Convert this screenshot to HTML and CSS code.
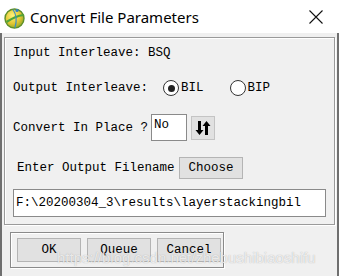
FILE: index.html
```html
<!DOCTYPE html>
<html lang="en">
<head>
    <meta charset="UTF-8">
    <meta name="viewport" content="width=device-width, initial-scale=1.0">
    <title>Convert File Parameters</title>
    <link rel="stylesheet" href="styles.css">
</head>
<body>

<div class="window">
    <!-- Title bar -->
    <div class="titlebar">
        <svg class="app-icon" width="22" height="22" viewBox="0 0 22 22">
            <defs>
                <radialGradient id="globe" cx="0.4" cy="0.35" r="0.7">
                    <stop offset="0" stop-color="#fff27a"/>
                    <stop offset="0.6" stop-color="#e2c631"/>
                    <stop offset="1" stop-color="#8aa526"/>
                </radialGradient>
            </defs>
            <circle cx="10.5" cy="11.5" r="9.5" fill="url(#globe)" stroke="#5e8f2a" stroke-width="1.4"/>
            <path d="M2.5 15 C7 12, 12 9, 19.5 8" stroke="#4fa53a" stroke-width="2.2" fill="none"/>
            <path d="M9 2.5 C12 7, 13 14, 11 20.5" stroke="#3c8fc4" stroke-width="1.2" fill="none"/>
            <circle cx="13" cy="3.5" r="1.6" fill="#2f7fc7"/>
        </svg>
        <span class="title">Convert File Parameters</span>
        <svg class="close" width="14" height="14" viewBox="0 0 14 14">
            <path d="M0.5 0.5 L13.5 13.5 M13.5 0.5 L0.5 13.5" stroke="#111" stroke-width="1.1"/>
        </svg>
    </div>

    <div class="client">
        <!-- Parameters frame -->
        <section class="frame">
            <div class="row row-input">Input Interleave: BSQ</div>

            <div class="row row-output">
                <span class="label-output">Output Interleave:</span>
                <span class="radio checked"></span><span class="radio-text">BIL</span>
                <span class="radio second"></span><span class="radio-text">BIP</span>
            </div>

            <div class="row row-place">
                <span class="label-place">Convert In Place ?</span>
                <span class="small-field">No</span>
                <span class="toggle-btn">
                    <svg width="16" height="16" viewBox="0 0 16 16">
                        <path d="M3 1 H6 V10 H8.5 L4.5 15 L0.5 10 H3 Z" fill="#000"/>
                        <path d="M10 15 H13 V6 H15.5 L11.5 1 L7.5 6 H10 Z" fill="#000"/>
                    </svg>
                </span>
            </div>

            <div class="row row-file">
                <span class="label-file">Enter Output Filename</span>
                <span class="btn choose">Choose</span>
            </div>

            <div class="path-field">F:\20200304_3\results\layerstackingbil</div>
        </section>

        <!-- Action buttons -->
        <div class="actions">
            <span class="btn action">OK</span>
            <span class="btn action">Queue</span>
            <span class="btn action">Cancel</span>
        </div>

        <div class="watermark">https://blog.csdn.net/zhebushibiaoshifu</div>
    </div>
</div>

</body>
</html>
```

FILE: styles.css
```css
/* Global styles */
body {
    margin: 0;
    padding: 0;
    background-color: #f0f0f0;
}

.window {
    width: 339px;
    height: 276px;
    display: flex;
    flex-direction: column;
    font-family: "Liberation Mono", monospace;
    font-size: 12.5px;
    color: #000;
}

/* Title bar */
.titlebar {
    height: 33px;
    background-color: #fff;
    display: flex;
    align-items: center;
    flex-shrink: 0;
}

.app-icon {
    margin-left: 4px;
    margin-top: 2px;
}

.title {
    margin-left: 4px;
    font-family: "Noto Sans", sans-serif;
    font-size: 15px;
    color: #000;
}

.close {
    margin-left: auto;
    margin-right: 16px;
    margin-top: 1px;
}

/* Client area */
.client {
    flex: 1;
    position: relative;
    background-color: #f0f0f0;
    border-left: 2px solid #6f6f6f;
    border-right: 2px solid #6f6f6f;
    padding: 4px 0 0 2px;
}

.frame {
    width: 328px;
    height: 186px;
    border: 1px solid #9a9a9a;
    box-shadow: inset 1px 1px 0 #fff, 1px 1px 0 #fff;
    display: flex;
    flex-direction: column;
    padding: 5px 0 0 8px;
    box-sizing: content-box;
    width: 321px;
    height: 181px;
}

.row {
    display: flex;
    align-items: center;
}

.row-input {
    height: 20px;
}

.row-output {
    height: 24px;
    margin-top: 13px;
}

.label-output {
    width: 150px;
}

.radio {
    width: 14px;
    height: 14px;
    border: 1.5px solid #333;
    border-radius: 50%;
    background-color: #fff;
    position: relative;
}

.radio.checked::after {
    content: "";
    position: absolute;
    left: 3.5px;
    top: 3.5px;
    width: 7px;
    height: 7px;
    border-radius: 50%;
    background-color: #222;
}

.radio.second {
    margin-left: 26px;
}

.radio-text {
    margin-left: 2px;
}

.row-place {
    height: 27px;
    margin-top: 14px;
}

.label-place {
    width: 138px;
}

.small-field {
    width: 32px;
    height: 25px;
    border: 1px solid #8a8a8a;
    background-color: #fff;
    padding-left: 2px;
    line-height: 20px;
    box-sizing: content-box;
}

.toggle-btn {
    width: 22px;
    height: 22px;
    margin-left: 4px;
    border: 1px solid #c4c4c4;
    background-color: #e1e1e1;
    display: flex;
    align-items: center;
    justify-content: center;
}

.row-file {
    height: 22px;
    margin-top: 16px;
    padding-left: 4px;
}

.label-file {
    width: 162px;
}

.btn {
    background-color: #e1e1e1;
    border: 1px solid #b4b4b4;
    display: flex;
    align-items: center;
    justify-content: center;
    box-sizing: border-box;
}

.choose {
    width: 64px;
    height: 22px;
}

.path-field {
    margin-top: 10px;
    width: 313px;
    height: 28px;
    box-sizing: border-box;
    border: 1px solid #8a8a8a;
    background-color: #fff;
    padding-left: 2px;
    display: flex;
    align-items: center;
}

/* Bottom buttons */
.actions {
    margin-top: 7px;
    margin-left: 6px;
    width: 206px;
    height: 29px;
    border: 1px solid #8a8a8a;
    box-shadow: inset 1px 1px 0 #fff, 1px 1px 0 #fff;
    display: flex;
    gap: 6px;
    padding: 5px 0 0 6px;
    box-sizing: content-box;
}

.action {
    width: 64px;
    height: 24px;
}

.watermark {
    position: absolute;
    left: 55px;
    top: 216px;
    font-family: "Liberation Sans", Arial, sans-serif;
    font-size: 15px;
    color: rgba(255, 255, 255, 0.75);
    text-shadow: 0 0 1px rgba(120, 120, 120, 0.6);
    white-space: nowrap;
}
```
